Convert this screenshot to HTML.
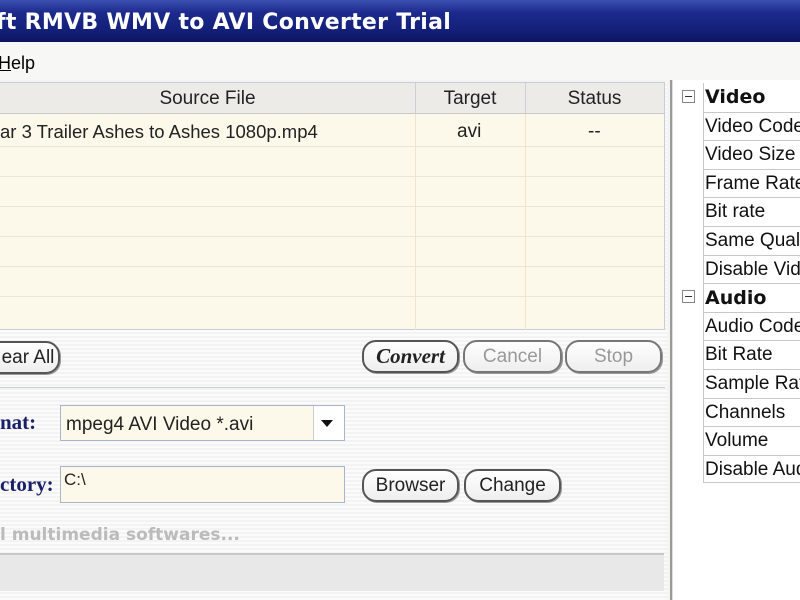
<!DOCTYPE html>
<html><head><style>
*{margin:0;padding:0;box-sizing:border-box}
body{width:800px;height:600px;overflow:hidden;background:#f4f4f2;font-family:"Liberation Sans",sans-serif;position:relative}
.abs{position:absolute}
#title{left:0;top:0;width:800px;height:42px;background:linear-gradient(180deg,#3a4fb0 0%,#1c2a8c 30%,#14207a 70%,#0c155f 100%);color:#fff;font:bold 22px "DejaVu Sans",sans-serif;line-height:46px;white-space:nowrap;letter-spacing:0.3px}
#menu{top:42px;left:0;width:800px;height:38px;background:#f7f7f5;font-size:18px;line-height:42px}
#left{left:0;top:80px;width:667px;height:520px;background:repeating-linear-gradient(180deg,#f3f3f3 0 2px,#fbfbfb 2px 4px)}
#tbl{left:0;top:82px;width:665px;height:248px;background:#fdf9ea;border:1px solid #c8ccd8;border-left:none}
.hd{top:0;height:31px;background:#ecebe8;border-bottom:1px solid #c9c9c9;font-size:19px;line-height:31px;text-align:center;color:#222}
.row{left:0;width:664px;height:1px;background:#ebe6d4}
.vl{top:0;width:1px;height:31px;background:#cfcfcf}
.btn{height:33px;border:2px solid #555;border-radius:14px;background:linear-gradient(#fff,#eee);font-size:19px;text-align:center;line-height:29px;color:#222;box-shadow:1px 1px 0 #999}
.dis{color:#999;border-color:#777}
.lbl{font:bold 21px "Liberation Serif",serif;color:#1a2068}
.fld{background:#fdf9ea;border:1px solid #aab4cc;font-size:19px;color:#222}
#right{left:670px;top:80px;width:130px;height:520px;background:#fff;border-left:2px solid #9a9a9a}
.tr{left:31px;width:100px;height:28.6px;border-top:1px solid #c8c8c8;border-left:1px solid #c8c8c8;font-size:19px;line-height:28px;padding-left:1px;white-space:nowrap;overflow:hidden;color:#111}
.b{font-weight:bold;font-family:"DejaVu Sans",sans-serif;font-size:19px}
.mx{left:10px;width:13px;height:13px;border:1px solid #888;background:#fff}
.mx:after{content:"";position:absolute;left:2px;top:5px;width:7px;height:1px;background:#333}
</style></head><body>
<div id="title" class="abs"><span style="margin-left:-4px">ft RMVB WMV to AVI Converter Trial</span></div>
<div id="menu" class="abs"><span style="margin-left:-2px"><u>H</u>elp</span></div>
<div id="left" class="abs"></div>
<div id="tbl" class="abs">
 <div class="abs hd" style="left:0;width:415px">Source File</div>
 <div class="abs hd" style="left:415px;width:110px">Target</div>
 <div class="abs hd" style="left:525px;width:139px">Status</div>
 <div class="abs vl" style="left:415px"></div><div class="abs vl" style="left:525px"></div>
 <div class="abs" style="left:0;top:38px;font-size:18.5px;color:#222">ar 3 Trailer Ashes to Ashes 1080p.mp4</div>
 <div class="abs" style="left:457px;top:38px;font-size:19px;color:#222">avi</div>
 <div class="abs" style="left:588px;top:38px;font-size:19px;color:#222">--</div>
 <div class="abs row" style="top:63px"></div><div class="abs row" style="top:93px"></div>
 <div class="abs row" style="top:123px"></div><div class="abs row" style="top:153px"></div>
 <div class="abs row" style="top:183px"></div><div class="abs row" style="top:213px"></div>
 <div class="abs" style="left:415px;top:31px;width:1px;height:216px;background:#eee6cc"></div>
 <div class="abs" style="left:525px;top:31px;width:1px;height:216px;background:#eee6cc"></div>
</div>
<div class="abs btn" style="left:-20px;top:341px;width:80px;padding-left:16px">ear All</div>
<div class="abs btn" style="left:362px;top:340px;width:97px;font:bold italic 21px 'Liberation Serif',serif;line-height:29px">Convert</div>
<div class="abs btn dis" style="left:463px;top:340px;width:99px">Cancel</div>
<div class="abs btn dis" style="left:565px;top:340px;width:97px">Stop</div>
<div class="abs" style="left:0;top:387px;width:665px;height:1px;background:#c9cdd8"></div>
<div class="abs lbl" style="left:0;top:410px">nat:</div>
<div class="abs fld" style="left:60px;top:405px;width:285px;height:36px;line-height:38px;padding-left:5px">mpeg4 AVI Video *.avi</div>
<div class="abs" style="left:313px;top:406px;width:31px;height:34px;background:#fff;border-left:1px solid #ccc"></div>
<div class="abs" style="left:321px;top:420px;width:0;height:0;border-left:6px solid transparent;border-right:6px solid transparent;border-top:7px solid #111"></div>
<div class="abs lbl" style="left:0;top:472px">ctory:</div>
<div class="abs fld" style="left:60px;top:466px;width:285px;height:37px;line-height:26px;padding-left:3px;font-size:17px">C:\</div>
<div class="abs btn" style="left:362px;top:469px;width:97px">Browser</div>
<div class="abs btn" style="left:464px;top:469px;width:97px">Change</div>
<div class="abs" style="left:0;top:525px;font:bold 17px 'DejaVu Sans',sans-serif;color:#bbb">l multimedia softwares...</div>
<div class="abs" style="left:0;top:553px;width:664px;height:38px;background:#e8e8e8;border-top:2px solid #c8c8c8"></div>
<div id="right" class="abs">
 <div class="abs" style="left:0;top:0;width:1px;height:520px;background:#ddd"></div>
 <div class="abs mx" style="top:10px"></div>
 <div class="abs tr b" style="top:3px;border-top:none">Video</div>
 <div class="abs tr" style="top:31.6px">Video Codec</div>
 <div class="abs tr" style="top:60.2px">Video Size</div>
 <div class="abs tr" style="top:88.8px">Frame Rate</div>
 <div class="abs tr" style="top:117.4px">Bit rate</div>
 <div class="abs tr" style="top:146px">Same Quality</div>
 <div class="abs tr" style="top:174.6px">Disable Video</div>
 <div class="abs mx" style="top:210px"></div>
 <div class="abs tr b" style="top:203.2px">Audio</div>
 <div class="abs tr" style="top:231.8px">Audio Codec</div>
 <div class="abs tr" style="top:260.4px">Bit Rate</div>
 <div class="abs tr" style="top:289px">Sample Rate</div>
 <div class="abs tr" style="top:317.6px">Channels</div>
 <div class="abs tr" style="top:346.2px">Volume</div>
 <div class="abs tr" style="top:374.8px;border-bottom:1px solid #c8c8c8">Disable Audio</div>
</div>
</body></html>
